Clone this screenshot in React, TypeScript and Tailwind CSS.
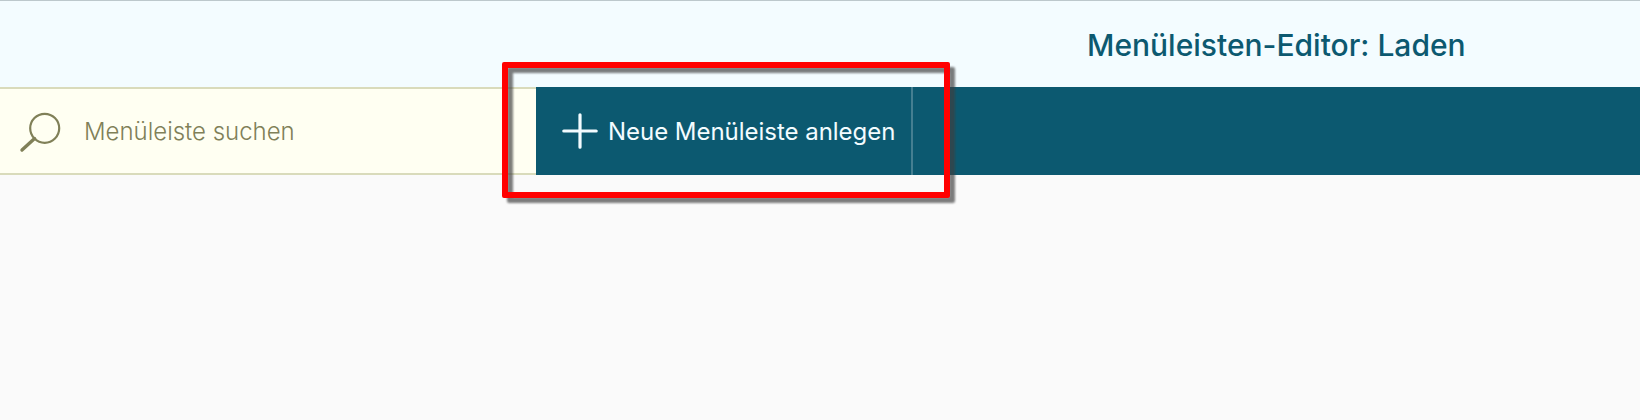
function SearchIcon() {
  return (
    <svg width="42" height="42" viewBox="0 0 42 42" fill="none" stroke="#808058" className="shrink-0" aria-hidden="true">
      <circle cx="25.7" cy="16.3" r="14.5" strokeWidth="2.2" />
      <path d="M15.6 26.6 3 38" strokeWidth="3.4" strokeLinecap="round" />
    </svg>
  );
}

function PlusIcon() {
  return (
    <svg width="36" height="36" viewBox="0 0 36 36" fill="none" stroke="#f3fcff" strokeWidth="3.2" strokeLinecap="round" className="shrink-0" aria-hidden="true">
      <path d="M18 1.8v32.4M1.8 18h32.4" />
    </svg>
  );
}

export default function App() {
  return (
    <div className="relative flex h-[420px] w-[1640px] flex-col overflow-hidden bg-[#fafafa] font-['Inter','Liberation_Sans',sans-serif]">
      <header className="flex h-[87px] border-t border-[#bcc8cc] bg-[#f3fcff] pl-[1087px] pt-[22px]">
        <h1 className="whitespace-nowrap text-[30px] font-medium leading-[44px] text-[#0c5970]">Menüleisten-Editor: Laden</h1>
      </header>
      <div className="flex h-[88px] bg-[#0c5970]">
        <label className="flex w-[536px] items-center border-y-2 border-[#d9dbbb] bg-[#fffff2] pl-[19px] pt-[3px]">
          <SearchIcon />
          <span className="ml-[23px] whitespace-nowrap pb-[2px] text-2xl font-light tracking-[-0.02px] text-[#808058]">Menüleiste suchen</span>
        </label>
        <button className="flex w-[377px] items-center border-r-2 border-[#457f91] pl-[26px] text-[#f3fcff]">
          <PlusIcon />
          <span className="ml-[10px] whitespace-nowrap pt-[2px] text-2xl tracking-[-0.03px]">Neue Menüleiste anlegen</span>
        </button>
      </div>
      <div className="absolute left-[502px] top-[62px] h-[136px] w-[448px] rounded-[2px] border-[6px] border-[#ff0000] [filter:drop-shadow(5.5px_5.5px_1.2px_rgba(64,64,64,0.68))]" />
    </div>
  );
}
